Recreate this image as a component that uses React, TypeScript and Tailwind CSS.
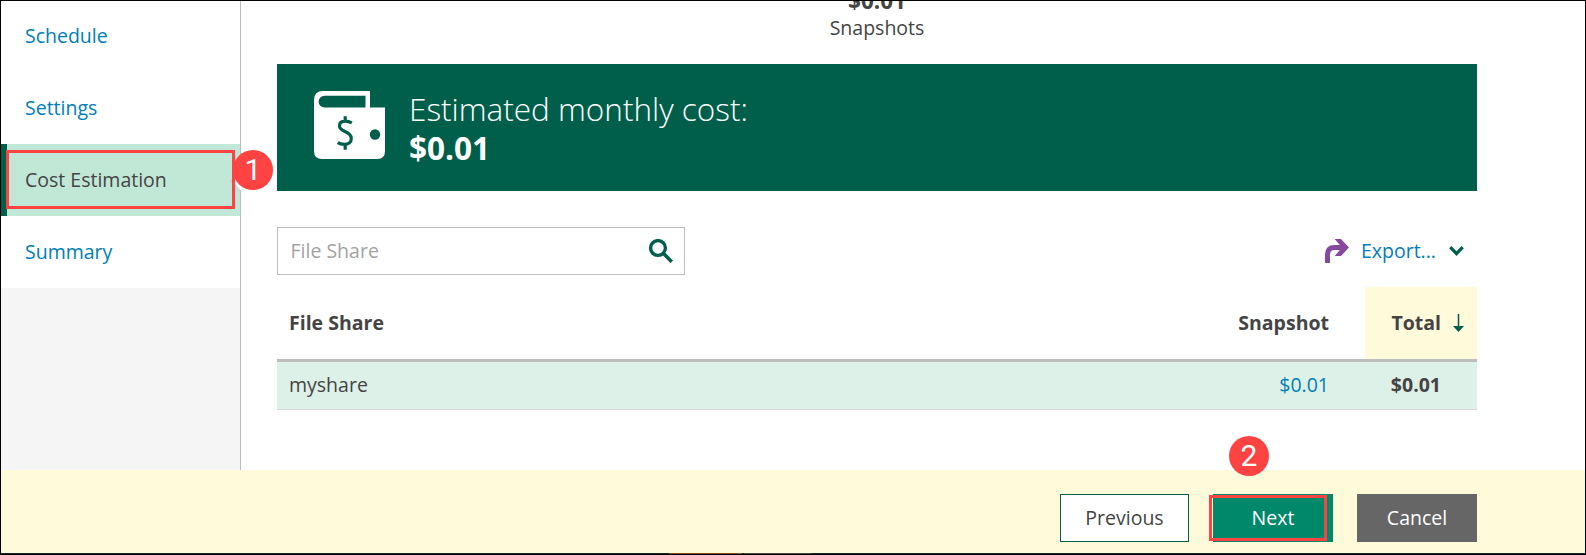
import type { ReactNode } from "react";

function NavItem({ label, active = false }: { label: string; active?: boolean }) {
  return (
    <a
      className={
        active
          ? "relative flex h-[72px] items-center border-l-[6px] border-[#005f4b] bg-[#c1e8d7] pb-0.5 pl-[18px] text-[#444444]"
          : "flex h-[72px] items-center bg-white pb-0.5 pl-6 text-[#007eb8]"
      }
    >
      {label}
      {active && (
        <svg className="absolute top-[26px] -right-px" width="11" height="22" viewBox="0 0 11 22">
          <path d="M11 0.5L0.7 11L11 21.5Z" fill="#fff" />
          <path d="M11 0.5L0.7 11L11 21.5" fill="none" stroke="#bdbdbd" />
        </svg>
      )}
    </a>
  );
}

function Marker({ children, className }: { children: ReactNode; className: string }) {
  return (
    <div
      className={`absolute flex size-10 items-center justify-center rounded-full bg-[#ff4343] font-['Roboto',sans-serif] text-[30px] leading-none text-white ${className}`}
    >
      {children}
    </div>
  );
}

function Wallet() {
  return (
    <svg width="71" height="68" viewBox="0 0 71 68">
      <path
        fill="#fff"
        fillRule="evenodd"
        d="M9 0H56V16.500H71V60Q71 68 63 68H8Q0 68 0 60V9Q0 0 9 0ZM10.500 4.700A5.900 5.900 0 0 0 10.500 16.500H51.500V4.700Z"
      />
      <circle cx="61" cy="43.500" r="5.200" fill="#005f4b" />
      <path
        d="M37.800 31.800C35.500 30.600 33.500 30.100 31.300 30.100C27.600 30.100 25.500 32 25.500 34.900C25.500 41.500 37.300 39.500 37.300 47.400C37.300 51 34.600 53.400 30.300 53.400C27.800 53.400 25.500 52.800 23.700 51.700M31.200 25.300V30.500M31.200 53V58.700"
        fill="none"
        stroke="#005f4b"
        strokeWidth="3.200"
      />
    </svg>
  );
}

export default function App() {
  return (
    <div className="relative flex h-[555px] w-[1586px] flex-col overflow-hidden border border-black bg-white font-['Open_Sans',sans-serif] text-[19.5px] leading-[27px] text-[#444444]">
      <div className="flex h-[469px]">
        <nav className="flex w-[240px] shrink-0 flex-col border-r border-[#bdbdbd] bg-[#f5f5f5]">
          <div className="-mt-px">
            <NavItem label="Schedule" />
            <NavItem label="Settings" />
            <NavItem label="Cost Estimation" active />
            <NavItem label="Summary" />
          </div>
        </nav>
        <main className="ml-9 flex w-[1200px] flex-col">
          <div className="flex h-[63px] flex-col items-center">
            <div className="-mt-[14px] h-[27px] text-[22.5px] leading-[27px] font-bold">$0.01</div>
            <div>Snapshots</div>
          </div>
          <section className="flex h-[127px] shrink-0 bg-[#005f4b] pl-[36.7px] text-white">
            <div className="w-[95.3px] pt-[26.5px]">
              <Wallet />
            </div>
            <div className="pt-[25px] text-[31.5px] leading-[39px]">
              <div className="font-light">Estimated monthly cost:</div>
              <div className="font-bold">$0.01</div>
            </div>
          </section>
          <div className="mt-9 flex h-12 shrink-0 items-center justify-between">
            <div className="flex h-12 w-[408px] items-center justify-between border border-[#bdbdbd] pr-[11px] pl-[12.5px] text-[#a3a3a3]">
              <span className="pb-0.5">File Share</span>
              <svg width="24" height="24" viewBox="0 0 24 24" fill="none" stroke="#005f4b" strokeWidth="3.300">
                <circle cx="9" cy="9" r="7.400" />
                <path d="M14.300 14.300L22.800 22.800" strokeWidth="3.600" />
              </svg>
            </div>
            <div className="flex items-center pr-[13px] text-[#007eb8]">
              <svg className="mr-[12px]" width="24" height="24" viewBox="0 0 24 24">
                <path d="M2.500 24V15.500Q2.500 8.500 9.500 8.500H19" fill="none" stroke="#854a9b" strokeWidth="5" />
                <path d="M9.700 0H16L24 8.500L16 17H9.700L17 8.500Z" fill="#854a9b" />
              </svg>
              <span className="pb-0.5">Export...</span>
              <svg className="ml-[13px]" width="15" height="10" viewBox="0 0 15 10">
                <path d="M1.300 1.200L7.500 7.600L13.700 1.200" fill="none" stroke="#005f4b" strokeWidth="3.200" />
              </svg>
            </div>
          </div>
          <div className="mt-3 flex h-[75px] shrink-0 items-stretch border-b-[3px] border-[#bdbdbd] font-bold">
            <div className="flex flex-1 items-center pb-0.5 pl-3">File Share</div>
            <div className="flex items-center pr-9 pb-0.5">Snapshot</div>
            <div className="flex w-28 items-center justify-end bg-[#fffada] pr-[13px]">
              <span className="pb-0.5">Total</span>
              <svg className="ml-[12px]" width="11" height="18" viewBox="0 0 11 18">
                <path d="M5.500 0V14" stroke="#005f4b" strokeWidth="1.500" />
                <path d="M0 12H11L5.500 18Z" fill="#005f4b" />
              </svg>
            </div>
          </div>
          <div className="flex h-12 shrink-0 items-center border-b border-[#d9d9d9] bg-[#def1e8] pb-0.5">
            <div className="flex-1 pl-3">myshare</div>
            <div className="pr-9 text-[#007eb8]">$0.01</div>
            <div className="w-28 pr-9 text-right font-bold">$0.01</div>
          </div>
        </main>
      </div>
      <footer className="flex h-[83px] shrink-0 gap-6 bg-[#fffada] pt-6 pl-[1059px]">
        <button className="h-12 w-[129px] border border-[#005f4b] bg-white pb-0.5">Previous</button>
        <button className="h-12 w-[120px] bg-[#00886b] pb-0.5 text-white">Next</button>
        <button className="h-12 w-[120px] bg-[#666666] pb-0.5 text-white">Cancel</button>
      </footer>
      <div className="flex h-px shrink-0 bg-[#17212b]">
        <div className="ml-[668px] w-[73px] bg-[#8a4b1c]" />
        <div className="ml-[2px] w-[67px] bg-[#454545]" />
      </div>

      <div className="absolute top-[149px] left-[5px] h-[59px] w-[229px] border-[3px] border-[#ff4343]" />
      <Marker className="top-[149px] left-[232px]">1</Marker>
      <div className="absolute top-[494px] left-[1208px] h-[46px] w-[118px] border-[3px] border-[#ff4343]" />
      <Marker className="top-[435px] left-[1228px]">2</Marker>
    </div>
  );
}
